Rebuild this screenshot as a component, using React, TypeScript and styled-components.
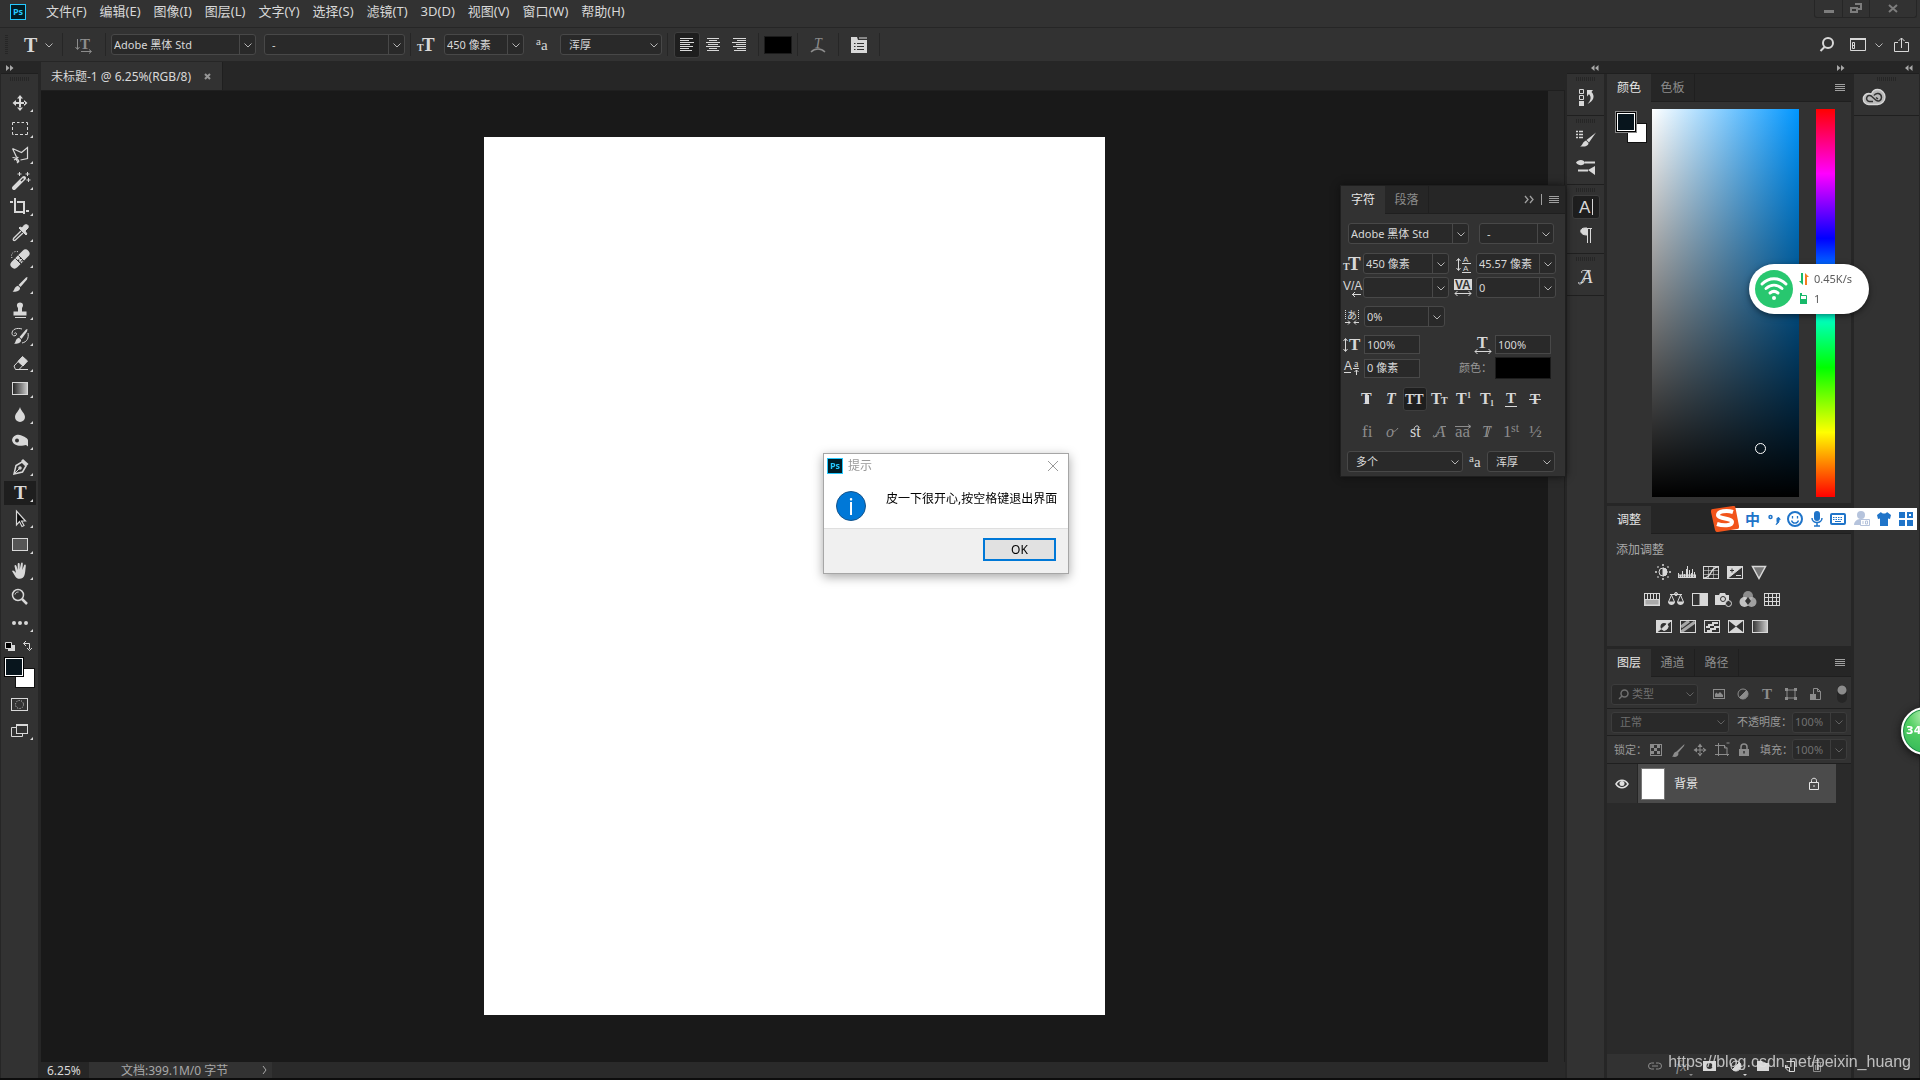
import React from 'react';
import styled, { createGlobalStyle, css } from 'styled-components';

const ui = '"Noto Sans", "Noto Sans CJK SC", sans-serif';
const serif = '"Liberation Serif", serif';

const c = {
  bar: '#323232',
  strip: '#262626',
  field: '#292929',
  edge: '#484848',
  line: '#262626',
  text: '#d8d8d8',
  dim: '#8c8c8c',
  faint: '#707070',
};

const GlobalStyle = createGlobalStyle`
  * { box-sizing: border-box; }
  body { margin: 0; background: #000; overflow: hidden; }
  button, input, select { font: inherit; color: inherit; margin: 0; padding: 0; border: 0; background: none; outline: none; border-radius: 0; }
  button { overflow: visible; }
  svg { display: block; flex: none; overflow: visible; }
`;

/* ---------- frame ---------- */

const Window = styled.div`
  display: flex;
  flex-direction: column;
  height: 100vh;
  background: ${c.strip};
  border: solid #0d0d0d;
  border-width: 0 0 2px;
  font: 12px/16px ${ui};
  color: ${c.text};
`;

const MenuBar = styled.header`
  display: flex;
  align-items: center;
  height: 28px;
  padding: 0 3px 0 10px;
  background: ${c.bar};
  border-bottom: 1px solid ${c.line};
`;

const Menus = styled.nav`
  display: flex;
  flex: 1;
  gap: 13px;
  padding: 0 0 6px 20px;
  font-size: 13px;
  line-height: 18px;
`;

const PsBadge = styled.span`
  display: grid;
  place-items: center;
  width: 16px;
  height: 16px;
  border: 1px solid #26c9ff;
  background: #001d26;
  color: #26c9ff;
  font: bold 9px/12px "Open Sans", sans-serif;
`;

const BadgeSlot = styled.span`
  padding-bottom: 4px;
`;

const Captions = styled.div`
  display: flex;
  align-self: flex-start;
  height: 18px;
  border: solid ${c.strip};
  border-width: 0 1px 1px;
  border-radius: 0 0 3px 3px;
  color: #7d7d7d;
`;

const Caption = styled.button<{ $w: number }>`
  display: grid;
  place-items: center;
  width: ${(p) => p.$w}px;
  & + & { border-left: 1px solid ${c.strip}; }
`;

const OptionsBar = styled.div`
  display: flex;
  align-items: center;
  height: 34px;
  padding: 0 0 0 5px;
  background: ${c.bar};
  border-bottom: 1px solid ${c.line};
`;

const Sep = styled.span`
  width: 1px;
  height: 23px;
  background: #262626;
`;

const Slot = styled.span<{ $w: number }>`
  display: flex;
  flex: none;
  justify-content: center;
  align-items: center;
  width: ${(p) => p.$w}px;
`;

const Spring = styled.span`
  flex: 1;
`;

const IconButton = styled.button<{ $w?: number; $h?: number; $on?: boolean; $dim?: boolean }>`
  display: grid;
  flex: none;
  place-items: center;
  width: ${(p) => p.$w ?? 24}px;
  height: ${(p) => p.$h ?? 24}px;
  color: ${(p) => (p.$dim ? c.dim : c.text)};
  ${(p) =>
    p.$on &&
    css`
      background: #1e1e1e;
      border: 1px solid #3e3e3e;
      border-radius: 3px;
    `}
`;

const Swatch = styled.button<{ $w: number; $h: number }>`
  width: ${(p) => p.$w}px;
  height: ${(p) => p.$h}px;
  background: #000;
  border: 1px solid #1c1c1c;
`;

/* ---------- fields ---------- */

const FieldBox = styled.label<{ $w: number; $square?: boolean; $dim?: boolean; $pad?: number }>`
  display: flex;
  flex: none;
  width: ${(p) => p.$w}px;
  height: ${(p) => (p.$square ? 19 : 21)}px;
  background: ${c.field};
  border: 1px solid ${(p) => (p.$dim ? '#3c3c3c' : c.edge)};
  border-radius: ${(p) => (p.$square ? 0 : 3)}px;
  color: ${(p) => (p.$dim ? c.faint : c.text)};
  font-size: 11px;
  line-height: 16px;
  input {
    flex: 1;
    min-width: 0;
    padding-left: ${(p) => p.$pad ?? 2}px;
  }
  button {
    display: grid;
    place-items: center;
    width: 16px;
    border-left: 1px solid ${(p) => (p.$dim ? '#3c3c3c' : c.edge)};
  }
`;

const SelectBox = styled.label<{ $w: number; $dim?: boolean; $pad?: number }>`
  display: grid;
  flex: none;
  align-items: center;
  width: ${(p) => p.$w}px;
  height: 21px;
  background: ${c.field};
  border: 1px solid ${(p) => (p.$dim ? '#3c3c3c' : c.edge)};
  border-radius: 3px;
  color: ${(p) => (p.$dim ? c.faint : c.text)};
  font-size: 11px;
  & > * { grid-area: 1 / 1; }
  & > svg { pointer-events: none; }
  & > svg:last-child { justify-self: end; margin-right: 2px; }
  & > svg:first-child { margin-left: 6px; }
  select {
    appearance: none;
    width: 100%;
    height: 19px;
    padding-left: ${(p) => p.$pad ?? 8}px;
  }
`;

const Chevron = () => (
  <svg width="10" height="8" viewBox="0 0 10 8" fill="none" stroke="currentColor" opacity="0.8">
    <path d="M1.5 2.5 5 6l3.5-3.5" />
  </svg>
);

function Combo(p: { w: number; value: string; label: string; dim?: boolean; pad?: number }) {
  return (
    <FieldBox $w={p.w} $dim={p.dim} $pad={p.pad}>
      <input aria-label={p.label} defaultValue={p.value} />
      <button aria-label={p.label}>
        <Chevron />
      </button>
    </FieldBox>
  );
}

function Drop(p: { w: number; value: string; label: string; dim?: boolean; pad?: number; icon?: React.ReactNode }) {
  return (
    <SelectBox $w={p.w} $dim={p.dim} $pad={p.pad}>
      {p.icon}
      <select aria-label={p.label}>
        <option>{p.value}</option>
      </select>
      <Chevron />
    </SelectBox>
  );
}

function Plain(p: { w: number; value: string; label: string }) {
  return (
    <FieldBox $w={p.w} $square>
      <input aria-label={p.label} defaultValue={p.value} />
    </FieldBox>
  );
}

/* ---------- icon helpers ---------- */

function G(p: { w?: number; h?: number; sw?: number; children: React.ReactNode }) {
  const w = p.w ?? 18;
  const h = p.h ?? 18;
  return (
    <svg width={w} height={h} viewBox={`0 0 ${w} ${h}`} fill="none" stroke="currentColor" strokeWidth={p.sw ?? 1}>
      {p.children}
    </svg>
  );
}

function L(p: { x: number; y: number; s: number; b?: boolean; i?: boolean; sans?: boolean; fill?: string; children: string }) {
  return (
    <text
      x={p.x}
      y={p.y}
      fontSize={p.s}
      fontFamily={p.sans ? '"Liberation Sans", sans-serif' : serif}
      fontWeight={p.b ? 700 : 400}
      fontStyle={p.i ? 'italic' : 'normal'}
      fill={p.fill ?? 'currentColor'}
      stroke="none"
    >
      {p.children}
    </text>
  );
}

const SizeIcon = () => (
  <G w={18} h={18}>
    <L x={0} y={15} s={10} b>T</L>
    <L x={5} y={15} s={19} b>T</L>
  </G>
);

const AaIcon = () => (
  <G w={14} h={14}>
    <L x={1} y={7} s={11}>a</L>
    <L x={6} y={12} s={15}>a</L>
  </G>
);

const MenuLines = () => (
  <G w={11} h={8}>
    <path d="M0 .5h10M0 2.5h10M0 4.5h10M0 6.5h10" />
  </G>
);

const Arrows = ({ flip }: { flip?: boolean }) => (
  <svg width="8" height="6" viewBox="0 0 8 6" fill="#a8a8a8">
    <path d={flip ? 'M7.500 0 4 3l3.500 3zM3.500 0 0 3l3.500 3z' : 'M0 0 3.500 3 0 6zM4 0l3.500 3L4 6z'} />
  </svg>
);

const Grip = styled.span`
  display: block;
  width: 20px;
  height: 4px;
  background: repeating-linear-gradient(90deg, #262626 0 1px, transparent 1px 2px);
`;

const OptGrip = styled.span`
  width: 3px;
  height: 20px;
  background: repeating-linear-gradient(#262626 0 1px, transparent 1px 2px);
`;

/* ---------- tools ---------- */

const tools: [string, React.ReactNode][] = [
  ['移动', <path key="a" d="M17 8h2v4h4v2h-4v4h-2v-4h-4v-2h4zM18 5l3 3.5h-6zM18 21l3-3.5h-6zM10.500 13l3.500-3v6zM25.500 13 22 10v6z" fill="currentColor" stroke="none" />],
  ['选框', <path key="a" d="M10.5 9V6.500H13M15 6.500h2.500M19.500 6.500H22M24 6.500h1.500V9M25.500 11v3M25.500 16v2.500H23M21 18.500h-3M16 18.500h-3M11.500 18.500h-1V16M10.500 14v-3" />],
  ['套索', <path key="a" d="m10.500 6.500 9 4 6-5v11l-7 1.500M10.500 6.500l4 8.500m-4 .500c3 0 5 1 6 3s-1 1.500-2-.5.500-3 2-2.500M12 18l3-1.500M15 21l2-2" strokeWidth="1.200" />],
  ['魔棒', <g key="a"><path d="m12 20 10-10" strokeWidth="4" strokeLinecap="round" /><path d="m19 13 2.500-2.500" stroke="#323232" strokeWidth="1.500" /><path d="M17.500 4v4m-2-2h4M25.500 4v4m-2-2h4M26.500 10v4m-2-2h4" /></g>],
  ['裁剪', <g key="a" strokeWidth="2"><path d="M13 4v14h9M8 8h3M15 8h7v12M24 17h3" /></g>],
  ['吸管', <g key="a"><path d="m19 11-7.500 7.500c-.8 1.500.3 2.500 1.700 1.700L21 13" strokeWidth="1.300" /><path d="m17 8 7 7 1-1-2-3 3-3c1-3-1-4-3.500-3L20 8l-2-1z" fill="currentColor" /></g>],
  ['修复', <g key="a"><path d="m12.500 18.500 11-11" strokeWidth="8" strokeLinecap="round" /><path d="m13.500 12.500 7 7M16.500 9.500l7 7" stroke="#323232" /><path d="M18.500 11.500v1.500M16.500 13.500v1.500M20 14v1.500M18 15.500v1.500" stroke="#323232" strokeWidth="1.500" /><path d="M10 12C8 8 12 4 17 6" strokeDasharray="1 1.500" /></g>],
  ['画笔', <g key="a" fill="currentColor" stroke="none"><path d="M25.500 5 24 5.500 16.500 13l2 2L25 7.500zM16 13.700l2 2c.5 3-4 4.500-7.500 4 2-1 1.500-5 5.500-6z" /></g>],
  ['图章', <g key="a"><path d="M18 4.500c3 0 4 3 2 5.500v3.500h4.500v4h-13v-4H16V10c-2-2.500-1-5.500 2-5.500z" fill="currentColor" stroke="none" /><path d="M13 19.500h11" /></g>],
  ['历史', <g key="a"><path d="M25.500 5 24 5.500 17.500 13l2 2L25 7.500zM17 13.700l2 2c.5 3-3.500 4.500-7 4 2-1 1-5 5-6z" fill="currentColor" stroke="none" /><path d="M20 5c-5-1.500-10 0-10 4.500 0 3 4.500 3 4.500.5 0-1.500-2-1.500-2-.5M26 9c1 5-1 9-6 10" /></g>],
  ['橡皮', <g key="a"><path d="m12 16 8-8.500 4.500 4-7.500 8h-3.500z" /><path d="m16 11.500 4.500-5 5 4.500-4.500 5z" fill="currentColor" /><path d="M14 19.500h12" /></g>],
  ['渐变', <g key="a"><defs><linearGradient id="tg"><stop stopColor="#222" /><stop offset="1" stopColor="#ccc" /></linearGradient></defs><rect x="10.500" y="6.500" width="15" height="12" fill="url(#tg)" /></g>],
  ['模糊', <path key="a" d="M18 5c1 4 5 6.500 5 10a5 5 0 0 1-10 0c0-3.500 4-6 5-10z" fill="currentColor" stroke="none" />],
  ['减淡', <g key="a"><path d="M10 12c1-5 6-6 9.500-4.500 3 1.500 6.500 2.500 6.500 5v6l-2-1.500c-4 1-13 2-14-5z" fill="currentColor" stroke="none" /><circle cx="15" cy="12.500" r="2" fill="#323232" stroke="none" /></g>],
  ['钢笔', <g key="a" strokeWidth="1.500"><path d="m12 20 2-8.500L20 8l4 4-3.500 6z" /><path d="m12 20 5.500-5.500" strokeWidth="1" /><circle cx="18" cy="14" r="1" /><path d="m20 6 5.500 5" strokeWidth="3" /></g>],
  ['文字', <L key="a" x={12} y={19} s={19} b>T</L>],
  ['路径选择', <path key="a" d="M14.500 5v14l3-3.500 2.500 5 2-1-2.500-4.500h4z" fill="#0c0c0c" strokeWidth="1.200" />],
  ['矩形', <rect key="a" x="10.500" y="6.500" width="15" height="12" fill="#555" />],
  ['抓手', <path key="a" d="M10 13c1-1.500 2.500 0 4 2l-1.500-7c0-1.500 1.500-1.500 2 0l1.200 4V6c0-1.500 2-1.500 2 0v5.500L19 5.500c.3-1.500 2-1 1.800.5l-.5 6L22 7.500c.5-1.500 2-1 1.800.5-.4 2.500-.3 5-1 8-1 6-7.500 6-9.500 2.500z" fill="currentColor" stroke="none" />],
  ['缩放', <g key="a"><circle cx="16" cy="11" r="5.500" strokeWidth="1.500" /><path d="M13 10.500c.5-2 2-2.500 3.500-2.500" /><path d="m20 15 5 5" strokeWidth="2.500" /></g>],
  ['更多', <path key="a" d="M12 11a2 2 0 1 1 0 4 2 2 0 0 1 0-4zm6 0a2 2 0 1 1 0 4 2 2 0 0 1 0-4zm6 0a2 2 0 1 1 0 4 2 2 0 0 1 0-4z" fill="currentColor" stroke="none" />],
];

const Main = styled.div`
  display: flex;
  flex: 1;
  min-height: 0;
`;

const ToolColumn = styled.aside`
  display: flex;
  flex-direction: column;
  width: 37px;
  margin: 0 3px 0 1px;
`;

const StripHead = styled.div`
  display: flex;
  align-items: center;
  height: 12px;
  padding-left: 5px;
  border-bottom: 1px solid #1f1f1f;
`;

const ToolBody = styled.div`
  display: flex;
  flex: 1;
  flex-direction: column;
  align-items: center;
  background: ${c.bar};
  padding-top: 3px;
`;

const ToolList = styled.div`
  display: flex;
  flex-direction: column;
  padding-top: 9px;
`;

const Tool = styled.button<{ $on?: boolean }>`
  width: 36px;
  height: 26px;
  background: ${(p) => (p.$on ? '#1e1e1e' : 'none')};
  background-clip: content-box;
  padding: 1px 2px;
  svg { margin: -1px -2px; }
`;

const ToolMisc = styled.div`
  display: flex;
  flex-direction: column;
  align-items: center;
  gap: 1px;
`;

/* ---------- document area ---------- */

const Workspace = styled.main`
  position: relative;
  display: flex;
  flex: 1;
  flex-direction: column;
  min-width: 0;
`;

const DocTabs = styled.div`
  display: flex;
  height: 29px;
  border-bottom: 1px solid #1f1f1f;
`;

const DocTab = styled.div`
  display: flex;
  align-items: center;
  gap: 13px;
  padding: 1px 11px 0 10px;
  background: ${c.bar};
  border-right: 1px solid #1f1f1f;
  font-size: 12px;
`;

const StageRow = styled.div`
  display: flex;
  flex: 1;
  min-height: 0;
`;

const Stage = styled.div`
  display: flex;
  flex: 1;
  align-items: center;
  justify-content: center;
  padding-bottom: 2px;
  background: #191919;
`;

const Paper = styled.div`
  width: 621px;
  aspect-ratio: 621 / 878;
  background: #fff;
`;

const ScrollTrack = styled.div`
  width: 17px;
  background: #2a2a2a;
  border-right: 1px solid #1f1f1f;
`;

const StatusBar = styled.footer`
  display: flex;
  height: 16px;
  background: #2a2a2a;
  line-height: 17px;
`;

const ZoomCell = styled.span`
  width: 48px;
  padding-left: 6px;
  background: ${c.strip};
`;

const SizeCell = styled.span`
  display: flex;
  align-items: center;
  justify-content: space-between;
  width: 183px;
  padding: 0 4px 0 32px;
  background: ${c.bar};
  color: #a8a8a8;
`;

/* ---------- panels ---------- */

const TabRow = styled.div`
  display: flex;
  align-items: stretch;
  height: 28px;
  background: ${c.strip};
`;

const Tab = styled.button<{ $on?: boolean }>`
  width: 44px;
  padding-bottom: ${(p) => (p.$on ? 1 : 0)}px;
  font-size: 12px;
  background: ${(p) => (p.$on ? c.bar : 'none')};
  color: ${(p) => (p.$on ? '#e6e6e6' : c.dim)};
  border: solid #1f1f1f;
  border-width: 0 ${(p) => (p.$on ? 0 : 1)}px ${(p) => (p.$on ? 0 : 1)}px 0;
`;

const TabEnd = styled.div`
  display: flex;
  flex: 1;
  align-items: center;
  justify-content: flex-end;
  gap: 7px;
  padding-right: 5px;
  border-bottom: 1px solid #1f1f1f;
  color: #a0a0a0;
`;

const CharPanel = styled.section`
  position: absolute;
  top: 124px;
  right: 0;
  width: 224px;
  background: ${c.bar};
  box-shadow: 0 0 0 1px #1f1f1f, 0 0 8px #0c0c0c;
`;

const CharBody = styled.div`
  display: flex;
  flex-direction: column;
  padding: 9px 0 4px;
`;

const FieldRow = styled.div<{ $gap?: number; $top?: number; $pad?: number }>`
  display: flex;
  align-items: center;
  gap: ${(p) => p.$gap ?? 3}px;
  margin-top: ${(p) => p.$top ?? 0}px;
  padding-left: ${(p) => p.$pad ?? 2}px;
`;

const SmallLabel = styled.span<{ $w: number }>`
  flex: none;
  width: ${(p) => p.$w}px;
  color: #989898;
  font-size: 11px;
  white-space: nowrap;
`;

const Dock = styled.aside`
  display: flex;
  flex-direction: column;
  margin: 0 1px 0 2px;
`;

const DockHead = styled.div`
  display: flex;
  align-items: center;
  height: 12px;
  border-bottom: 1px solid #1f1f1f;
`;

const HeadCell = styled.span<{ $w: number; $r: number }>`
  display: flex;
  justify-content: flex-end;
  width: ${(p) => p.$w}px;
  padding-right: ${(p) => p.$r}px;
`;

const DockCols = styled.div`
  display: flex;
  flex: 1;
  gap: 3px;
  min-height: 0;
`;

const IconCol = styled.div<{ $w: number }>`
  display: flex;
  flex-direction: column;
  width: ${(p) => p.$w}px;
  background: ${c.bar};
`;

const IconGroup = styled.div`
  display: flex;
  flex-direction: column;
  align-items: center;
  gap: 3px;
  padding: 3px 0 5px;
  border-bottom: 1px solid #1f1f1f;
`;

const PanelCol = styled.div`
  display: flex;
  flex-direction: column;
  gap: 3px;
  width: 244px;
`;

const Panel = styled.section<{ $grow?: boolean }>`
  display: flex;
  flex-direction: column;
  flex: ${(p) => (p.$grow ? 1 : 'none')};
  background: ${c.bar};
`;

const ColorBody = styled.div`
  display: flex;
  padding: 7px 16px 6px 8px;
`;

const PairBox = styled.div<{ $left?: number; $top?: number }>`
  display: grid;
  flex: none;
  width: 37px;
  height: 32px;
  margin-top: ${(p) => p.$top ?? 0}px;
  padding-left: ${(p) => p.$left ?? 0}px;
  grid-template-columns: 10px 10px 12px;
  grid-template-rows: 10px 10px 10px;
`;

const Back = styled.button<{ $s: number }>`
  grid-area: 2 / 2 / 4 / 4;
  width: ${(p) => p.$s}px;
  height: ${(p) => p.$s}px;
  background: #fff;
  border: 1px solid #111;
`;

const Front = styled.button<{ $s: number; $ring?: boolean }>`
  z-index: 1;
  grid-area: 1 / 1 / 3 / 3;
  width: ${(p) => p.$s}px;
  height: ${(p) => p.$s}px;
  background: #08151d;
  border: 1px solid #fff;
  box-shadow: 0 0 0 1px #000${(p) => (p.$ring ? ', 0 0 0 2px #888' : '')};
`;

const Field = styled.div`
  position: relative;
  flex: 1;
  height: 388px;
  background: linear-gradient(to top, #000, transparent), linear-gradient(to right, #fff, #0096ff);
`;

const Picker = styled.span`
  position: absolute;
  left: 70%;
  top: 86%;
  width: 11px;
  height: 11px;
  border: 1px solid #fff;
  border-radius: 50%;
`;

const Hue = styled.div`
  width: 19px;
  margin-left: 17px;
  background: linear-gradient(#f00, #f0f, #00f, #0ff, #0f0, #ff0, #f00);
`;

const AdjustBody = styled.div`
  display: flex;
  flex-direction: column;
  height: 112px;
  padding: 8px 10px 0 9px;
  color: #a8a8a8;
`;

const AdjustTitle = styled.span`
  height: 18px;
`;

const AdjustRow = styled.div<{ $pad: number }>`
  display: flex;
  height: 27px;
  padding-left: ${(p) => p.$pad}px;
`;

const LayerRowBar = styled.div<{ $h?: number; $top?: number }>`
  display: flex;
  align-items: center;
  height: ${(p) => p.$h ?? 27}px;
  padding: ${(p) => p.$top ?? 0}px 4px 0;
  border-bottom: 1px solid #1f1f1f;
  color: ${c.dim};
`;

const Toggle = styled.span`
  flex: none;
  width: 10px;
  height: 18px;
  margin-left: 10px;
  border-radius: 5px;
  background: radial-gradient(circle at 5px 5px, #8c8c8c 4px, #262626 5px);
`;

const LayerList = styled.div`
  flex: 1;
  background: #2a2a2a;
`;

const Layer = styled.div`
  display: flex;
  align-items: center;
  height: 39px;
  margin-right: 15px;
  background: #4b4b4b;
  color: #e6e6e6;
`;

const Eye = styled.button`
  display: grid;
  place-items: center;
  align-self: stretch;
  width: 31px;
  background: ${c.bar};
  border-right: 1px solid #262626;
  color: #e0e0e0;
`;

const Thumb = styled.span`
  width: 24px;
  height: 32px;
  margin: 0 9px 0 3px;
  background: #fff;
  border: 1px solid #777;
`;

const LayerName = styled.span`
  flex: 1;
`;

const LayerFoot = styled.div`
  display: flex;
  align-items: center;
  gap: 3px;
  height: 24px;
  padding-left: 36px;
  color: #dedede;
`;

/* ---------- floating windows ---------- */

const Dialog = styled.section`
  position: fixed;
  left: 823px;
  top: 453px;
  width: 246px;
  background: #fff;
  border: 1px solid #a6a6a6;
  box-shadow: 0 3px 10px rgba(0, 0, 0, 0.35);
  color: #000;
`;

const DialogTitle = styled.div`
  display: flex;
  align-items: center;
  gap: 5px;
  height: 24px;
  padding: 0 9px 0 3px;
  color: #999;
`;

const DialogBody = styled.div`
  display: flex;
  gap: 20px;
  height: 51px;
  padding: 13px 12px 0;
  border-bottom: 1px solid #dfdfdf;
`;

const DialogText = styled.p`
  margin: 0;
  white-space: nowrap;
`;

const InfoDisc = styled.span`
  display: grid;
  flex: none;
  place-items: center;
  width: 30px;
  height: 30px;
  border-radius: 50%;
  border: 1px solid #14548c;
  background: #0078d7;
  color: #fff;
  font: 24px/24px "Open Sans", sans-serif;
`;

const DialogFoot = styled.div`
  display: flex;
  justify-content: flex-end;
  height: 44px;
  padding: 9px 12px 12px;
  background: #f0f0f0;
`;

const OkButton = styled.button`
  width: 73px;
  height: 23px;
  background: #e1e1e1;
  border: 2px solid #0078d7;
`;

const WifiPill = styled.div`
  position: fixed;
  right: 51px;
  top: 264px;
  display: flex;
  align-items: center;
  gap: 6px;
  width: 120px;
  height: 50px;
  padding-left: 6px;
  border-radius: 25px;
  background: #fff;
  box-shadow: 0 2px 6px rgba(0, 0, 0, 0.5);
  color: #5c5c5c;
  font-size: 11px;
`;

const WifiRows = styled.div`
  display: flex;
  flex-direction: column;
  gap: 4px;
  span { display: flex; align-items: center; gap: 5px; }
`;

const ImeBar = styled.div`
  position: fixed;
  right: 3px;
  top: 505px;
  display: flex;
  align-items: center;
`;

const ImeStrip = styled.div`
  display: flex;
  align-items: center;
  justify-content: space-between;
  width: 190px;
  height: 22px;
  margin: 0 0 0 -12px;
  padding: 0 4px 0 18px;
  background: #fff;
  color: #1f74c9;
`;

const ImeLogo = styled.span`
  z-index: 1;
`;

const ImeText = styled.span`
  font: bold 15px/20px "Noto Sans CJK SC", sans-serif;
`;

const Ball = styled.div`
  position: fixed;
  right: -29px;
  top: 707px;
  width: 48px;
  height: 48px;
  padding-left: 3px;
  border: 2px solid #fff;
  border-radius: 50%;
  background: radial-gradient(circle at 50% 15%, #b9f0b4, #52cf62 40%, #2fb457);
  box-shadow: inset 0 0 0 1px #1f8a48, 0 2px 8px #111;
  color: #fff;
  font: bold 11px/44px "DejaVu Sans", sans-serif;
`;

const Watermark = styled.div`
  position: fixed;
  right: 9px;
  bottom: 8px;
  color: rgba(225, 225, 225, 0.8);
  font: 16px/20px "Liberation Sans", sans-serif;
`;

const CloudSlot = styled.span`
  padding-right: 25px;
`;

/* ---------- data ---------- */

const menus = ['文件(F)', '编辑(E)', '图像(I)', '图层(L)', '文字(Y)', '选择(S)', '滤镜(T)', '3D(D)', '视图(V)', '窗口(W)', '帮助(H)'];

const MenuItem = styled.button`
  white-space: nowrap;
`;

const styleRow: [string, React.ReactNode, boolean?][] = [
  ['仿粗体', <g key="g"><L x={3} y={14} s={16} b>T</L><path d="M9 5v9" strokeWidth="4" /></g>],
  ['仿斜体', <L key="g" x={4} y={14} s={16} b i>T</L>],
  ['全部大写', <L key="g" x={-1} y={14} s={14} b>TT</L>, true],
  ['小型大写', <g key="g"><L x={1} y={14} s={16} b>T</L><L x={11} y={14} s={10} b>T</L></g>],
  ['上标', <g key="g"><L x={2} y={14} s={16} b>T</L><L x={13} y={8} s={8} b>1</L></g>],
  ['下标', <g key="g"><L x={2} y={14} s={16} b>T</L><L x={12} y={16} s={8} b>1</L></g>],
  ['下划线', <g key="g"><L x={4} y={13} s={15} b>T</L><path d="M3 16.500h12" /></g>],
  ['删除线', <g key="g"><L x={4} y={14} s={15} b>T</L><path d="M3 9.500h12" /></g>],
];

const otRow: [string, React.ReactNode, boolean?][] = [
  ['连字', <L key="g" x={4} y={15} s={17}>fi</L>],
  ['上下文', <g key="g"><L x={4} y={15} s={16} i>o</L><path d="M10 9c2 1 4 0 6-3" /></g>],
  ['自由连字', <g key="g"><L x={4} y={15} s={16}>st</L><path d="M8 7c1-4 5-4 5-1" /></g>, true],
  ['花饰字', <g key="g"><L x={5} y={15} s={17} i>A</L><path d="M4 13c-3 3 3 3 5-3M12 4.500h4" /></g>],
  ['文体', <g key="g"><L x={1} y={15} s={17}>aa</L><path d="M1 4.500h15M14 2.500l3 2-3 2" /></g>],
  ['标题', <g key="g"><L x={4} y={15} s={16} i>T</L><path d="M12 5 9 15" /></g>],
  ['序数字', <g key="g"><L x={1} y={15} s={17}>1</L><L x={9} y={10} s={12}>st</L></g>],
  ['分数字', <L key="g" x={3} y={15} s={17}>½</L>],
];

const box = <rect x="1.500" y="3.500" width="15" height="12" />;

const adjust: { pad: number; items: [string, React.ReactNode][] }[] = [
  {
    pad: 35,
    items: [
      ['亮度', <g key="g"><circle cx="9" cy="9" r="4" /><path d="M9 5a4 4 0 0 1 0 8z" fill="currentColor" /><path d="M9 1v2M9 15v2M1 9h2M15 9h2M3.500 3.500l1 1M13.500 13.500l1 1M3.500 14.500l1-1M13.500 4.500l1-1" strokeWidth="1.500" /></g>],
      ['色阶', <path key="g" d="M.5 15v-5M2.500 15v-3M4.500 15V8M6.500 15v-4M8.500 15V6M9.500 15V3M11.500 15V7M13.500 15v-5M14.500 15V6M16.500 15V9M17.500 15v-3M0 12h18M0 13h18M0 14.500h18" />],
      ['曲线', <g key="g">{box}<path d="M6.500 3.500v12M11.500 3.500v12M1.500 7.500h15M1.500 11.500h15" opacity=".6" /><path d="M2 15c8 0 6-11 14-11" strokeWidth="1.500" /></g>],
      ['曝光度', <g key="g">{box}<path d="M1.500 3.500h15l-15 12z" fill="currentColor" /><path d="M4 7.500h4M6 5.500v4" stroke="#323232" /><path d="M10 12.500h5" /></g>],
      ['自然饱和度', <g key="g"><path d="M2.500 3.500h13L9 15.500z" fill="#777" strokeWidth="1.500" /></g>],
    ],
  },
  {
    pad: 24,
    items: [
      ['色相', <g key="g">{box}<path d="M4.500 4v5M7.500 4v5M10.500 4v5M13.500 4v5" /><path d="M2 9.500h14V15H2z" fill="#aaa" /></g>],
      ['色彩平衡', <g key="g"><path d="M3 4.500h12M9 2.500v3" /><circle cx="9" cy="4" r="1.500" /><path d="m4.500 5-3 7h6zM13.500 5l-3 7h6z" /><path d="M1 12h7c-.5 4-6.500 4-7 0zM10 12h7c-.5 4-6.500 4-7 0z" fill="currentColor" stroke="none" /></g>],
      ['黑白', <g key="g">{box}<path d="M9 3.500h7.500v12H9z" fill="currentColor" /></g>],
      ['照片滤镜', <g key="g"><path d="M0 5h4l1-2h5l1 2h3v5l-4 5H0z" fill="currentColor" stroke="none" /><circle cx="8" cy="9" r="2.500" stroke="#323232" /><circle cx="13.500" cy="13.500" r="3" fill="#323232" /></g>],
      ['通道混合', <g key="g" stroke="none"><circle cx="9" cy="6" r="5" fill="#8d8d8d" /><circle cx="5.500" cy="12" r="5" fill="#ddd" opacity=".85" /><circle cx="12.500" cy="12" r="5" fill="#bbb" opacity=".8" /><path d="m9 7 3 4-3 4-3-4z" fill="#333" /></g>],
      ['颜色查找', <g key="g">{box}<path d="M5.500 3.500v12M9.500 3.500v12M13.500 3.500v12M1.500 7.500h15M1.500 11.500h15" /></g>],
    ],
  },
  {
    pad: 36,
    items: [
      ['反相', <g key="g">{box}<path d="M2 4h14L2 15z" fill="currentColor" /><circle cx="9" cy="9.500" r="3.500" fill="#323232" stroke="none" /><path d="M12 7 6.500 12A3.500 3.500 0 0 0 12 7z" fill="currentColor" /></g>],
      ['色调分离', <g key="g">{box}<path d="M2 10 10 4M2 15 16 5" strokeWidth="3" opacity=".7" /></g>],
      ['阈值', <g key="g">{box}<path d="M3 10h3V8h4V6h5M4 14h4v-2h4v-2h4" strokeWidth="2" /></g>],
      ['可选颜色', <g key="g">{box}<path d="M2 4h14L9 9.500zM2 15h14L9 9.500z" fill="currentColor" stroke="none" /></g>],
      ['渐变映射', <g key="g"><defs><linearGradient id="ag"><stop stopColor="#333" /><stop offset="1" stopColor="#ccc" /></linearGradient></defs><rect x="1.500" y="3.500" width="15" height="12" fill="url(#ag)" /></g>],
    ],
  },
];

const filters: [string, React.ReactNode][] = [
  ['像素图层', <g key="g"><rect x="3.500" y="4.500" width="11" height="9" /><path d="M5 12V9l1.500-1.500L8 9l2-2 3 3v2z" fill="currentColor" stroke="none" /></g>],
  ['调整图层', <g key="g"><circle cx="9" cy="9" r="5" /><path d="M12.500 5.500a5 5 0 0 1-7 7z" fill="currentColor" /></g>],
  ['文字图层', <L key="g" x={4} y={14} s={15} b>T</L>],
  ['形状图层', <g key="g"><rect x="5" y="5" width="8" height="8" /><path d="M3 3h3v3H3zM12 3h3v3h-3zM3 12h3v3H3zM12 12h3v3h-3z" fill="currentColor" stroke="none" /></g>],
  ['智能对象', <g key="g"><path d="M7.500 9V3.500h4l3 3v8H10M11.500 3.500v3h3" /><path d="M4 9h6v6H4z" fill="currentColor" stroke="none" /></g>],
];

const locks: [string, React.ReactNode][] = [
  ['透明像素', <g key="g"><rect x="3.500" y="3.500" width="11" height="11" /><path d="M4 4h3v3H4zM10 4h3v3h-3zM7 7h3v3H7zM4 10h3v3H4zM10 10h3v3h-3z" fill="currentColor" stroke="none" /></g>],
  ['图像像素', <path key="g" d="m15.500 3-8 7.500L9 12l6-7zM7.500 10.500l2 2c0 3-3 4-6.500 3 2-1 1-4 4.500-5z" fill="currentColor" stroke="none" />],
  ['位置', <path key="g" d="M8.500 5h1v3.500H13v1H9.500V13h-1V9.500H5v-1h3.500zM9 2.500 11.500 6h-5zM9 15.500 11.500 12h-5zM2.500 9 6 6.500v5zM15.500 9 12 6.500v5z" fill="currentColor" stroke="none" />],
  ['画板', <path key="g" d="M5.500 2v13M2 4.500h9l3 3V13M2 13.500h14M11.500 4v3h3M13.500 2h3M14.500 15v-2" />],
  ['全部', <g key="g"><path d="M4 8h10v7H4z" fill="currentColor" stroke="none" /><path d="M6 8V6a3 3 0 0 1 6 0v2" strokeWidth="1.500" /><path d="M9 10v2.500" stroke="#323232" strokeWidth="1.500" /></g>],
];

const footIcons: [string, React.ReactNode, boolean?][] = [
  ['链接', <path key="g" d="M8 6H5.500a3 3 0 0 0 0 6H8M10 6h2.500a3 3 0 0 1 0 6H10M6 9h6" />, true],
  ['效果', <g key="g"><L x={3} y={14} s={15} i>fx</L><path d="M16 17h4l-2 2z" fill="currentColor" stroke="none" /></g>, true],
  ['蒙版', <g key="g"><path d="M3 4h13v10H3z" fill="currentColor" stroke="none" /><circle cx="9.500" cy="9" r="3" fill="#323232" stroke="none" /></g>],
  ['调整', <g key="g"><circle cx="9" cy="9" r="5" /><path d="M12.500 5.500a5 5 0 0 1-7 7z" fill="currentColor" /><path d="M16 17h4l-2 2z" fill="currentColor" stroke="none" /></g>],
  ['组', <path key="g" d="M3 4h5l1 2h6v8H3z" fill="currentColor" stroke="none" />],
  ['新建', <path key="g" d="M5.500 4.500h8v10H8L4.500 11V8M4.500 10.500H8.500v4" />],
  ['删除', <path key="g" d="M4 5.500h10M7 5.500v-2h4v2M5.500 5.500v9h7v-9M7.500 8v5M10.500 8v5" />, true],
];

export default function App() {
  return (
    <Window>
      <GlobalStyle />
      <MenuBar>
        <BadgeSlot><PsBadge>Ps</PsBadge></BadgeSlot>
        <Menus>
          {menus.map((m) => <MenuItem key={m}>{m}</MenuItem>)}
        </Menus>
        <Captions>
          <Caption $w={27} aria-label="最小化"><G w={10} h={10}><path d="M0 7.500h10" strokeWidth="3" /></G></Caption>
          <Caption $w={27} aria-label="还原"><G w={12} h={11} sw={2}><path d="M5 1h6v5H8M1 5h6v4H1z" /></G></Caption>
          <Caption $w={47} aria-label="关闭"><G w={10} h={9} sw={2}><path d="m1 1 8 7M9 1 1 8" /></G></Caption>
        </Captions>
      </MenuBar>

      <OptionsBar>
        <OptGrip />
        <Slot $w={12} />
        <Slot $w={22}><G w={18}><L x={2} y={16} s={20} b>T</L></G></Slot>
        <Slot $w={14}><Chevron /></Slot>
        <Slot $w={6} /><Sep />
        <Slot $w={42}>
          <IconButton $dim aria-label="文本方向"><G w={18}><L x={5} y={13} s={15} b>T</L><path d="M2.500 3v10M.5 11l2 2.500 2-2.500M6 15.500h10M14 13.500l2.500 2-2.500 2" /></G></IconButton>
        </Slot>
        <Sep /><Slot $w={5} />
        <Combo w={145} value="Adobe 黑体 Std" label="字体" />
        <Slot $w={8} />
        <Combo w={141} value="-" label="字型" pad={7} />
        <Slot $w={5} /><Sep />
        <Slot $w={29}><SizeIcon /></Slot>
        <Slot $w={4} />
        <Combo w={80} value="450 像素" label="字号" />
        <Slot $w={36}><AaIcon /></Slot>
        <Drop w={102} value="浑厚" label="消除锯齿" />
        <Slot $w={5} /><Sep /><Slot $w={6} />
        <IconButton $on $w={26} $h={26} aria-label="左对齐"><G w={14} h={14}><path d="M0 .5h13M0 2.500h9M0 4.500h14M0 6.500h10M0 8.500h13M0 10.500h9M0 12.500h12" /></G></IconButton>
        <IconButton $w={26} aria-label="居中"><G w={14} h={14}><path d="M1 .5h12M3 2.500h8M0 4.500h14M2 6.500h10M0 8.500h14M3 10.500h8M1 12.500h12" /></G></IconButton>
        <IconButton $w={26} aria-label="右对齐"><G w={14} h={14}><path d="M1 .5h13M5 2.500h9M0 4.500h14M4 6.500h10M1 8.500h13M5 10.500h9M2 12.500h12" /></G></IconButton>
        <Slot $w={6} /><Sep /><Slot $w={5} />
        <Swatch $w={28} $h={18} aria-label="文本颜色" />
        <Slot $w={5} /><Sep />
        <Slot $w={40}><IconButton $dim aria-label="变形"><G w={16}><L x={4} y={12} s={14} i>T</L><path d="M1 16c4-4 10-4 14 0" strokeWidth="1.500" /></G></IconButton></Slot>
        <Sep />
        <Slot $w={40}>
          <IconButton aria-label="面板">
            <G w={16} h={16}><path d="M0 0h6l1 3h9v13H0z" fill="currentColor" stroke="none" /><path d="M8 1h8" stroke="#888" strokeWidth="2" /><path d="M3 6.500h1.500M6 6.500h7M3 9.500h1.500M6 9.500h7M3 12.500h1.500M6 12.500h7" stroke="#323232" /></G>
          </IconButton>
        </Slot>
        <Sep />
        <Spring />
        <IconButton $w={28} aria-label="搜索"><G w={16} h={16} sw={2}><circle cx="8" cy="6" r="5" /><path d="m4.500 10-4 4" /></G></IconButton>
        <IconButton $w={32} aria-label="工作区"><G w={16} h={14}><path d="M.5 1.500h15v11H.5z" /><path d="M0 1h16" strokeWidth="2" /><path d="M2.500 4.500h2v6h-2zM2 7.500h3" /></G></IconButton>
        <Slot $w={10}><Chevron /></Slot>
        <IconButton $w={36} aria-label="共享"><G w={16} h={16}><path d="M4 5.500H.5v9h14v-9H11M7.500 11V1M4.500 4l3-3 3 3" /></G></IconButton>
      </OptionsBar>

      <Main>
        <ToolColumn>
          <StripHead><Arrows /></StripHead>
          <ToolBody>
            <Grip />
            <ToolList>
              {tools.map(([name, art]) => (
                <Tool key={name} $on={name === '文字'} aria-label={name}>
                  <G w={36} h={26}>
                    {art}
                    {name !== '缩放' && <path d="M31 19v3h-3z" fill="currentColor" stroke="none" />}
                  </G>
                </Tool>
              ))}
            </ToolList>
            <ToolMisc>
              <G w={36} h={21}>
                <path d="M6 9h7v6H6z" fill="currentColor" stroke="none" />
                <path d="M3.500 6.500h6v6h-6z" fill="#000" />
                <path d="M21.500 7.500h6V13M24 5l-2.500 2.500L24 10M25 12l2.500 2.500L30 12" />
              </G>
              <PairBox $left={4}>
                <Front $s={18} aria-label="前景色" />
                <Back $s={20} aria-label="背景色" />
              </PairBox>
              <Tool aria-label="快速蒙版">
                <G w={36} h={26}><rect x="9.500" y="7.500" width="16" height="12" /><circle cx="17.500" cy="13.500" r="4" strokeDasharray="1 1.500" /></G>
              </Tool>
              <Tool aria-label="屏幕模式">
                <G w={36} h={26}><path d="M14 9.500H9.500v9h11V16" /><rect x="14.500" y="6.500" width="11" height="9" /><path d="M14 7h12" strokeWidth="2" /><path d="M31 19v3h-3z" fill="currentColor" stroke="none" /></G>
              </Tool>
            </ToolMisc>
          </ToolBody>
        </ToolColumn>

        <Workspace>
          <DocTabs>
            <DocTab>未标题-1 @ 6.25%(RGB/8)<G w={7} h={7} sw={2}><path d="m1 1 5 5M6 1 1 6" opacity=".6" /></G></DocTab>
          </DocTabs>
          <StageRow>
            <Stage><Paper /></Stage>
            <ScrollTrack />
          </StageRow>
          <StatusBar>
            <ZoomCell>6.25%</ZoomCell>
            <SizeCell>文档:399.1M/0 字节<G w={6} h={10}><path d="m1 1 3 4-3 4" /></G></SizeCell>
          </StatusBar>

          <CharPanel>
            <TabRow>
              <Tab $on>字符</Tab>
              <Tab>段落</Tab>
              <TabEnd>
                <G w={10} h={9} sw={1.3}><path d="m1 1 3 3.500L1 8M6 1l3 3.500L6 8" /></G>
                <G w={1} h={11}><path d="M.5 0v11" /></G>
                <MenuLines />
              </TabEnd>
            </TabRow>
            <CharBody>
              <FieldRow $gap={10} $pad={7}>
                <Combo w={121} value="Adobe 黑体 Std" label="字体" />
                <Combo w={75} value="-" label="字型" pad={7} />
              </FieldRow>
              <FieldRow $top={9} $gap={2}>
                <SizeIcon />
                <Combo w={86} value="450 像素" label="字号" />
                <Slot $w={23}><G w={18}><path d="M4.500 4v11M2.500 6l2-2.500 2 2.500M2.500 13l2 2.500 2-2.500M8 8.500h9M8 17.500h9" /><L x={9} y={7} s={8} sans>A</L><L x={9} y={16} s={8} sans>A</L></G></Slot>
                <Combo w={80} value="45.57 像素" label="行距" />
              </FieldRow>
              <FieldRow $top={3} $gap={2}>
                <G w={18}><L x={0} y={11} s={12} sans>V/A</L><path d="M9 15.500h9M12 13l-2.500 2.500L12 18" /></G>
                <Combo w={86} value="" label="字距微调" />
                <Slot $w={23}><G w={18}><path d="M0 0h18v11H0z" fill="currentColor" stroke="none" /><L x={1} y={10} s={12} b sans fill="#323232">VA</L><path d="M1 14.500h16M3.500 12 1 14.500 3.500 17M14.500 12l2.500 2.500-2.500 2.500" /></G></Slot>
                <Combo w={80} value="0" label="字距" />
              </FieldRow>
              <FieldRow $top={8}>
                <G w={18}><text x="4" y="11" fontSize="10" fontFamily='"Noto Sans CJK JP", sans-serif' fill="currentColor" stroke="none">あ</text><path d="M2.500 2v10M15.500 2v10" strokeDasharray="1 1" /><path d="M2 14.500h5M11 14.500h5M5 12.500l2 2-2 2M13 12.500l-2 2 2 2" /></G>
                <Combo w={81} value="0%" label="比例间距" />
              </FieldRow>
              <FieldRow $top={8}>
                <G w={18}><path d="M2.500 3v12M.5 5l2-2.500 2 2.500M.5 13l2 2.500 2-2.500" /><L x={6} y={14} s={17} b>T</L></G>
                <Plain w={56} value="100%" label="垂直缩放" />
                <Slot $w={48} />
                <G w={18}><L x={3} y={12} s={16} b>T</L><path d="M1 15.500h16M3.500 13 1 15.500 3.500 18M14.500 13l2.500 2.500-2.500 2.500" /></G>
                <Plain w={56} value="100%" label="水平缩放" />
              </FieldRow>
              <FieldRow $top={3}>
                <G w={18}><L x={1} y={11} s={12} sans>A</L><L x={11} y={8} s={10}>a</L><path d="M1 13.500h7M10 9.500h6M13.500 16v-5M11.500 13l2-2 2 2" /></G>
                <Plain w={56} value="0 像素" label="基线偏移" />
                <Slot $w={33} />
                <SmallLabel $w={33}>颜色：</SmallLabel>
                <Swatch $w={56} $h={22} aria-label="颜色" />
              </FieldRow>
              <FieldRow $top={8} $gap={0} $pad={14}>
                {styleRow.map(([n, art, on]) => (
                  <IconButton key={n} $on={on} aria-label={n}><G>{art}</G></IconButton>
                ))}
              </FieldRow>
              <FieldRow $top={8} $gap={0} $pad={14}>
                {otRow.map(([n, art, on]) => (
                  <IconButton key={n} $dim={!on} aria-label={n}><G>{art}</G></IconButton>
                ))}
              </FieldRow>
              <FieldRow $top={8} $gap={0} $pad={6}>
                <Drop w={116} value="多个" label="语言" />
                <Slot $w={24}><AaIcon /></Slot>
                <Drop w={68} value="浑厚" label="消除锯齿方式" />
              </FieldRow>
            </CharBody>
          </CharPanel>
        </Workspace>

        <Dock>
          <DockHead>
            <HeadCell $w={37} $r={5}><Arrows flip /></HeadCell>
            <HeadCell $w={247} $r={6}><Arrows /></HeadCell>
            <HeadCell $w={68} $r={6}><Arrows flip /></HeadCell>
          </DockHead>
          <DockCols>
            <IconCol $w={37}>
              <IconGroup>
                <Grip />
                <IconButton $w={28} $h={26} aria-label="历史记录"><G w={18} h={18}><path d="M2.500 1.500h4v4h-4zM2.500 7.500h4v4h-4z" /><path d="M2 13h5v5H2z" fill="currentColor" stroke="none" /><path d="M10 2h6l-1.500 2c4 4 2 9-4 12 3.500-4 4-7 1.500-10l-2 2.500z" fill="currentColor" stroke="none" /></G></IconButton>
              </IconGroup>
              <IconGroup>
                <Grip />
                <IconButton $w={28} $h={25} aria-label="画笔预设"><G w={22} h={18}><path d="M1 1.500h2M4 1.500h4M1 4.500h2M4 4.500h4M1 7.500h2M4 7.500h4" strokeWidth="1.500" /><path d="m21 2.500-9.500 7.500 2.500 2.500zM11 10.500l2.500 2.500c0 3-4 4-8.500 3.500 3-1 2-4.500 6-6z" fill="currentColor" stroke="none" /></G></IconButton>
                <IconButton $w={28} $h={25} aria-label="画笔"><G w={22} h={18}><path d="M10 4.500h10M3 12.500h10" strokeWidth="2" /><path d="M1 4.500c2-3.500 8-3.500 9 0-1 3.500-7 3.500-9 0zM13 12l7-4v9z" fill="currentColor" stroke="none" /></G></IconButton>
              </IconGroup>
              <IconGroup>
                <Grip />
                <IconButton $w={28} $h={24} $on aria-label="字符"><G w={18}><L x={2} y={15} s={17} sans>A</L><path d="M15.500 1v16" /></G></IconButton>
                <IconButton $w={28} $h={26} aria-label="段落样式"><G w={16} h={16}><path d="M9 1v7C1 8 1 1 7 1z" fill="currentColor" /><path d="M9.500 1v15M12.500 1v15M6 1.500h8" /></G></IconButton>
              </IconGroup>
              <IconGroup>
                <Grip />
                <IconButton $w={28} $h={26} aria-label="字形"><G w={18}><L x={4} y={15} s={19} i>A</L><path d="M2 14c-2 3 4 3 6-3M5 5c-2-3 3-3 9-2" /></G></IconButton>
              </IconGroup>
            </IconCol>

            <PanelCol>
              <Panel>
                <TabRow>
                  <Tab $on>颜色</Tab>
                  <Tab>色板</Tab>
                  <TabEnd><MenuLines /></TabEnd>
                </TabRow>
                <ColorBody>
                  <PairBox $left={2} $top={4}>
                    <Front $s={18} $ring aria-label="前景色" />
                    <Back $s={20} aria-label="背景色" />
                  </PairBox>
                  <Field><Picker /></Field>
                  <Hue />
                </ColorBody>
              </Panel>

              <Panel>
                <TabRow>
                  <Tab $on>调整</Tab>
                  <TabEnd />
                </TabRow>
                <AdjustBody>
                  <AdjustTitle>添加调整</AdjustTitle>
                  {adjust.map((r) => (
                    <AdjustRow key={r.pad} $pad={r.pad}>
                      {r.items.map(([n, art]) => (
                        <IconButton key={n} aria-label={n}><G>{art}</G></IconButton>
                      ))}
                    </AdjustRow>
                  ))}
                </AdjustBody>
              </Panel>

              <Panel $grow>
                <TabRow>
                  <Tab $on>图层</Tab>
                  <Tab>通道</Tab>
                  <Tab>路径</Tab>
                  <TabEnd><MenuLines /></TabEnd>
                </TabRow>
                <LayerRowBar $h={32} $top={3}>
                  <Drop w={87} dim pad={20} value="类型" label="类型" icon={<G w={11} h={11} sw={1.5}><circle cx="6.500" cy="4.500" r="3.500" /><path d="m4 7-3 3" /></G>} />
                  <Slot $w={9} />
                  {filters.map(([n, art]) => (
                    <IconButton key={n} $dim aria-label={n}><G>{art}</G></IconButton>
                  ))}
                  <Toggle />
                </LayerRowBar>
                <LayerRowBar>
                  <Drop w={118} dim value="正常" label="混合模式" />
                  <Slot $w={8} />
                  <SmallLabel $w={55}>不透明度：</SmallLabel>
                  <Combo w={55} dim value="100%" label="不透明度" />
                </LayerRowBar>
                <LayerRowBar $h={28}>
                  <Slot $w={3} />
                  <SmallLabel $w={31}>锁定：</SmallLabel>
                  {locks.map(([n, art]) => (
                    <IconButton key={n} $w={22} $dim aria-label={n}><G>{art}</G></IconButton>
                  ))}
                  <Slot $w={5} />
                  <SmallLabel $w={32}>填充：</SmallLabel>
                  <Combo w={55} dim value="100%" label="填充" />
                </LayerRowBar>
                <LayerList>
                  <Layer>
                    <Eye aria-label="可见性"><G w={14} h={10}><path d="M1 5c3-5 9-5 12 0-3 5-9 5-12 0z" strokeWidth="1.500" /><circle cx="7" cy="4.500" r="2.500" fill="currentColor" stroke="none" /></G></Eye>
                    <Thumb />
                    <LayerName>背景</LayerName>
                    <Slot $w={44}><G w={12} h={14}><path d="M1.500 5.500h9v7h-9zM3.500 5.500v-2c0-3 5-3 5 0v2M6 8v2" /></G></Slot>
                  </Layer>
                </LayerList>
                <LayerFoot>
                  {footIcons.map(([n, art, dim]) => (
                    <IconButton key={n} $dim={dim} aria-label={n}><G>{art}</G></IconButton>
                  ))}
                </LayerFoot>
              </Panel>
            </PanelCol>

            <IconCol $w={65}>
              <IconGroup>
                <Grip />
                <IconButton $w={64} $h={26} aria-label="库">
                  <CloudSlot>
                    <G w={22} h={16} sw={1.3}>
                      <path d="M6 15.500a5.500 5.500 0 0 1-.5-11c1.500 0 2 .2 3 .5C10 1 13 .5 14.500.5a7 7 0 0 1 0 15z" fill="#b8b8b8" />
                      <path d="M10 12.500H6.500a3 3 0 1 1 2-5.300l4.500 4c2.500 2 5.500 0 5.500-3a4 4 0 0 0-7.500-1.700M13 8.500l2 1.500" stroke="#323232" strokeWidth="1.500" />
                    </G>
                  </CloudSlot>
                </IconButton>
              </IconGroup>
            </IconCol>
          </DockCols>
        </Dock>
      </Main>

      <Dialog role="dialog" aria-label="提示">
        <DialogTitle>
          <PsBadge>Ps</PsBadge>
          提示
          <Spring />
          <G w={12} h={12}><path d="m1 1 10 10M11 1 1 11" /></G>
        </DialogTitle>
        <DialogBody>
          <InfoDisc>i</InfoDisc>
          <DialogText>皮一下很开心,按空格键退出界面</DialogText>
        </DialogBody>
        <DialogFoot><OkButton>OK</OkButton></DialogFoot>
      </Dialog>

      <WifiPill>
        <svg width="38" height="38" viewBox="0 0 38 38" fill="none" stroke="#fff" strokeWidth="3" strokeLinecap="round">
          <circle cx="19" cy="19" r="19" fill="#28c76f" stroke="none" />
          <path d="M7 14c7-7 17-7 24 0M11 18.500c5-4.500 11-4.500 16 0M15 23c2.500-2 5.500-2 8 0" />
          <circle cx="19" cy="28" r="2" fill="#fff" stroke="none" />
        </svg>
        <WifiRows>
          <span>
            <svg width="10" height="12" viewBox="0 0 10 12"><path d="M4 0v12L0 8h2V0z" fill="#17b96a" /><path d="M6 12V0l4 4H8v8z" fill="#f57c1f" /></svg>
            0.45K/s
          </span>
          <span>
            <svg width="10" height="12" viewBox="0 0 10 12" fill="none" stroke="#17b96a"><path d="M1.500 2.500h6v8h-6z" /><path d="M1 6h7v5H1zM1 0h2v3H1z" fill="#17b96a" stroke="none" /></svg>
            1
          </span>
        </WifiRows>
      </WifiPill>

      <ImeBar>
        <ImeLogo>
          <svg width="28" height="28" viewBox="0 0 28 28" fill="none">
            <path d="M2 4 22 1c2 0 2 0 2.500 2L28 21c0 2 0 3-2 3L7 27c-2 0-2 0-3-2L0 7c0-2 0-3 2-3z" fill="#f2541b" />
            <path d="M22 7c-6-2-15-1-15 3s14 3 14 7-9 4-15 2" stroke="#fff" strokeWidth="4" />
          </svg>
        </ImeLogo>
        <ImeStrip>
          <ImeText>中</ImeText>
          <G w={12} h={12}><circle cx="2.500" cy="4" r="1.500" strokeWidth="1.500" /><path d="M9 5.500a1.500 1.500 0 1 1 2 2c0 2-1 3-3 4 1-1 1.500-2 1-3z" fill="currentColor" /></G>
          <G w={16} h={16} sw={2}><circle cx="8" cy="8" r="7" /><path d="M5.500 5v2.500M10.500 5v2.500M4.500 9.500c1 3.500 6 3.500 7 0" strokeWidth="1.300" /></G>
          <G w={12} h={16}><rect x="3" y="0" width="6" height="10" rx="3" fill="currentColor" stroke="none" /><path d="M1 7c0 6 10 6 10 0M6 12v3M3 15h6" strokeWidth="1.500" /></G>
          <G w={16} h={12}><rect x="1" y="1" width="14" height="10" rx="1" strokeWidth="2" /><path d="M3 4.500h10M3 6.500h10" strokeDasharray="1.500 1" /><path d="M5 8.500h6" /></G>
          <svg width="16" height="16" viewBox="0 0 16 16" fill="#b5c3dc"><circle cx="7" cy="4" r="4" /><path d="M0 14c0-8 14-8 14-2v2z" /><path d="M6.500 8.500h9v6h-9z" fill="#fff" stroke="#b5c3dc" /><path d="M9 10v3M11.500 10v3h2v-3z" fill="none" stroke="#b5c3dc" /></svg>
          <svg width="14" height="14" viewBox="0 0 14 14" fill="currentColor"><path d="M4 0c1 2 5 2 6 0l4 3-1 4-2-.5V14H3V6.500L1 7 0 3z" /></svg>
          <G w={14} h={14}><path d="M0 0h6v6H0zM0 8h6v6H0zM8 8h6v6H8z" fill="currentColor" stroke="none" /><path d="M9 1h4v4H9z" strokeWidth="2" /></G>
        </ImeStrip>
      </ImeBar>

      <Ball>34</Ball>
      <Watermark>https://blog.csdn.net/peixin_huang</Watermark>
    </Window>
  );
}
